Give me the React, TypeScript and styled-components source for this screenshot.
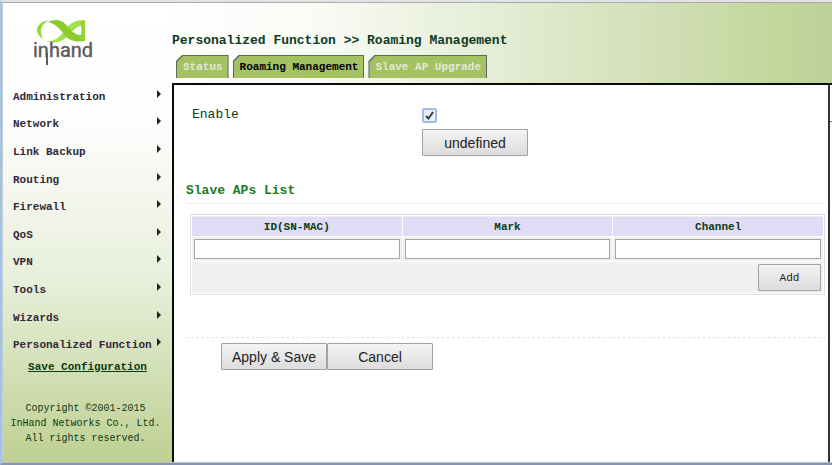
import React, { useState } from "react";
import styled, { createGlobalStyle } from "styled-components";

const mono = `"Liberation Mono", "DejaVu Sans Mono", monospace`;
const sans = `"Liberation Sans", Arial, sans-serif`;

const GlobalStyle = createGlobalStyle`
  * { box-sizing: border-box; }
  body { margin: 0; background: #fff; color: #0c3a14; font-family: ${mono}; }
`;

const Window = styled.div`
  display: flex;
  min-height: 100vh;
  border-top: 2px solid #e3e3e6;
  border-left: 2px solid #a3c3e3;
  border-bottom: 2px solid #8794b4;
`;

const Page = styled.div`
  flex: 1;
  display: flex;
  min-width: 0;
  border-top: 1px solid #a9aba9;
  border-left: 1px solid #c4cdd6;
  border-bottom: 1px solid #b9c0c4;
`;

const Sidebar = styled.aside`
  width: 169px;
  flex: none;
  display: flex;
  flex-direction: column;
  background: linear-gradient(#ffffff 0%, #fefefe 25%, #e8efdb 60%, #bed092 100%);
`;

const Brand = styled.a`
  display: block;
  height: 80px;
  padding: 16px 0 0 30px;
`;

const Menu = styled.ul`
  display: grid;
  grid-auto-rows: 1fr;
  height: 276px;
  margin: 0;
  padding: 0 11px 0 10px;
  list-style: none;
`;

const MenuItem = styled.li`
  display: flex;
`;

const MenuLink = styled.a`
  flex: 1;
  display: flex;
  justify-content: space-between;
  align-items: center;
  color: #32283a;
  font-size: 11px;
  font-weight: bold;
  text-decoration: none;
  white-space: nowrap;

  svg { margin-bottom: 6px; flex: none; }
`;

const SaveLink = styled.a`
  align-self: center;
  color: #0c3a14;
  font-size: 11px;
  font-weight: bold;
  line-height: 16px;
`;

const Copyright = styled.p`
  margin: 26px 0 0;
  padding-right: 4px;
  font-size: 10px;
  line-height: 15px;
  text-align: center;
`;

const Main = styled.main`
  flex: 1;
  min-width: 0;
  display: flex;
  flex-direction: column;
`;

const Header = styled.header`
  height: 80px;
  padding: 30px 0 0;
  background: linear-gradient(90deg, #fefefd 0%, #fafcf7 20%, #e4ecd4 50%, #cddcae 80%, #c3d69b 92%, #bfd09b 100%);
`;

const Title = styled.h1`
  margin: 0;
  font-size: 13px;
  line-height: 16px;
  color: #0c3a24;
`;

const Tabs = styled.div`
  display: flex;
  gap: 4px;
  padding: 6px 4px 0;
`;

const Tab = styled.button`
  height: 23px;
  padding: 1px 1px 0;
  border: 0;
  background: #5c6b5c;
  clip-path: polygon(0 6px, 6px 0, 100% 0, 100% 100%, 0 100%);
`;

const TabLabel = styled.span<{ $active: boolean }>`
  display: block;
  height: 22px;
  padding: 0 5px 0 6px;
  background: #a5c263;
  clip-path: polygon(0 6px, 6px 0, 100% 0, 100% 100%, 0 100%);
  color: ${(p) => (p.$active ? "#000" : "#e4e8d8")};
  font: bold 11px/22px ${mono};
  white-space: nowrap;
`;

const Body = styled.div`
  flex: 1;
  display: flex;
`;

const Content = styled.form`
  flex: 1;
  min-width: 0;
  padding: 18px 2px 0 12px;
  background: #fff;
  border: 2px solid #0a0a0a;
  border-bottom: 0;
  border-right-color: #333;
`;

const Gutter = styled.div`
  width: 2px;
  padding-top: 36px;
  border-top: 2px solid #0a0a0a;

  &::before {
    content: "";
    display: block;
    border-top: 1px solid #777;
  }
`;

const Settings = styled.div`
  display: grid;
  grid-template-columns: 230px auto;
  justify-content: start;
  align-items: center;
  padding-left: 6px;
`;

const SettingLabel = styled.label`
  font-size: 13px;
  line-height: 24px;
`;

const CheckWrap = styled.span`
  display: grid;
  width: 15px;
  height: 15px;
  place-items: center;

  > * { grid-area: 1 / 1; }
  svg { pointer-events: none; }
`;

const Checkbox = styled.input`
  appearance: none;
  width: 15px;
  height: 15px;
  margin: 0;
  border: 2px solid #9dbdf0;
  border-radius: 2px;
  background: #e9edf5;
`;

const Button = styled.button<{ $small?: boolean }>`
  width: ${(p) => (p.$small ? "63px" : "106px")};
  height: 27px;
  padding: 0;
  border: 1px solid #a2a2a2;
  border-radius: 1px;
  background: linear-gradient(#f4f4f4, #dcdcdc);
  color: #222;
  font: ${(p) => (p.$small ? `11px ${mono}` : `14px ${sans}`)};
`;

const UndefinedButton = styled(Button)`
  grid-column: 2;
  margin-top: 2px;
`;

const SectionTitle = styled.h2`
  margin: 27px 0 10px;
  padding-bottom: 4px;
  border-bottom: 1px solid #ececec;
  color: #1d7a26;
  font-size: 13px;
  line-height: 16px;
`;

const Table = styled.table`
  width: calc(100% - 5px);
  margin-left: 4px;
  table-layout: fixed;
  border: 1px solid #dedede;
  border-spacing: 1px;
  background: #fff;
`;

const Th = styled.th`
  height: 20px;
  padding: 0;
  border-top: 1px solid #f0f0f0;
  background: #e0dcf5;
  font-size: 11px;
  line-height: 18px;
`;

const Td = styled.td`
  padding: 2px;
  background: #f0f0f0;
  text-align: right;
  line-height: 0;
`;

const TextBox = styled.input`
  display: block;
  width: 100%;
  height: 20px;
  padding: 1px 3px;
  border: 1px solid #a6a6a6;
  background: #fff;
  font: 11px/16px ${mono};
`;

const Actions = styled.div`
  display: flex;
  margin-top: 42px;
  padding: 5px 0 0 35px;
  border-top: 1px dashed #e2e2e2;
`;

const menu = [
  "Administration",
  "Network",
  "Link Backup",
  "Routing",
  "Firewall",
  "QoS",
  "VPN",
  "Tools",
  "Wizards",
  "Personalized Function",
];
const tabs = ["Status", "Roaming Management", "Slave AP Upgrade"];
const columns = ["ID(SN-MAC)", "Mark", "Channel"];

function Logo() {
  return (
    <svg width="70" height="50" viewBox="0 0 70 50" role="img" aria-label="inhand">
      <path d="M17 1C9 2 4 6 4 11c0 4 3 7 6 9-1-2-2-5-2-8 0-5 4-9 9-11Z" fill="#96d936" />
      <path
        d="M13 22c9 1 14-4 19-11C37 4 42 1 52 1v6c-6-1-10 2-14 7-6 7-14 12-25 8Z"
        fill="#a0e24a"
      />
      <path
        d="M15 3c8-4 15-2 20 5 5 6 9 9 17 8v6c-11 2-17-1-22-8-5-6-8-9-15-11Z"
        fill="#8ccc31"
      />
      <path d="M52 1v21c-2 0-4-1-5-2 2-4 2-12 0-17Z" fill="#93d535" />
      <text
        x="0"
        y="38"
        fill="#61595e"
        stroke="#61595e"
        strokeWidth="0.4"
        fontFamily="Roboto, sans-serif"
        fontSize="20"
      >
        inhand
      </text>
      <path d="M14 34v12" stroke="#61595e" strokeWidth="2" />
    </svg>
  );
}

function Caret() {
  return (
    <svg width="4" height="8" viewBox="0 0 4 8" aria-hidden="true">
      <path d="M0 0 4 4 0 8Z" fill="#222" />
    </svg>
  );
}

export default function App() {
  const [enabled, setEnabled] = useState(true);
  const [active, setActive] = useState("Roaming Management");

  return (
    <>
      <GlobalStyle />
      <Window>
        <Page>
          <Sidebar>
            <Brand href="#">
              <Logo />
            </Brand>
            <nav>
              <Menu>
                {menu.map((name) => (
                  <MenuItem key={name}>
                    <MenuLink href="#">
                      {name}
                      <Caret />
                    </MenuLink>
                  </MenuItem>
                ))}
              </Menu>
            </nav>
            <SaveLink href="#">Save Configuration</SaveLink>
            <Copyright>
              Copyright ©2001-2015
              <br />
              InHand Networks Co., Ltd.
              <br />
              All rights reserved.
            </Copyright>
          </Sidebar>
          <Main>
            <Header>
              <Title>Personalized Function &gt;&gt; Roaming Management</Title>
              <Tabs role="tablist">
                {tabs.map((name) => (
                  <Tab
                    key={name}
                    type="button"
                    role="tab"
                    aria-selected={name === active}
                    onClick={() => setActive(name)}
                  >
                    <TabLabel $active={name === active}>{name}</TabLabel>
                  </Tab>
                ))}
              </Tabs>
            </Header>
            <Body>
              <Content onSubmit={(e) => e.preventDefault()}>
                <Settings>
                  <SettingLabel htmlFor="enable">Enable</SettingLabel>
                  <CheckWrap>
                    <Checkbox
                      id="enable"
                      type="checkbox"
                      checked={enabled}
                      onChange={(e) => setEnabled(e.target.checked)}
                    />
                    {enabled && (
                      <svg width="9" height="9" viewBox="0 0 9 9" aria-hidden="true">
                        <path d="M1 5 3.5 7.5 8 1" fill="none" stroke="#3b3b42" strokeWidth="2" />
                      </svg>
                    )}
                  </CheckWrap>
                  <UndefinedButton type="button">undefined</UndefinedButton>
                </Settings>
                <SectionTitle>Slave APs List</SectionTitle>
                <Table>
                  <thead>
                    <tr>
                      {columns.map((name) => (
                        <Th key={name} scope="col">
                          {name}
                        </Th>
                      ))}
                    </tr>
                  </thead>
                  <tbody>
                    <tr>
                      {columns.map((name) => (
                        <Td key={name}>
                          <TextBox type="text" aria-label={name} />
                        </Td>
                      ))}
                    </tr>
                    <tr>
                      <Td colSpan={3}>
                        <Button type="button" $small>
                          Add
                        </Button>
                      </Td>
                    </tr>
                  </tbody>
                </Table>
                <Actions>
                  <Button type="submit">Apply &amp; Save</Button>
                  <Button type="reset">Cancel</Button>
                </Actions>
              </Content>
              <Gutter />
            </Body>
          </Main>
        </Page>
      </Window>
    </>
  );
}
